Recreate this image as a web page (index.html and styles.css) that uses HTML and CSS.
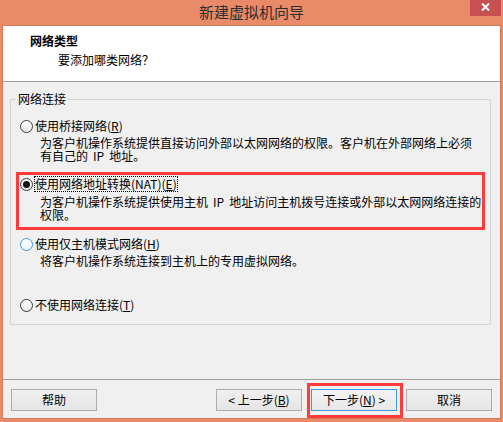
FILE: index.html
```html
<!DOCTYPE html>
<html lang="zh-CN">

<head>
    <meta charset="UTF-8">
    <meta name="viewport" content="width=device-width, initial-scale=1.0">
    <title>新建虚拟机向导</title>
    <link rel="stylesheet" href="styles.css">
</head>

<body>
    <div class="window">
        <div class="titlebar">
            <span></span>
            <span class="title">新建虚拟机向导</span>
            <span class="close">
                <svg width="9" height="8" viewBox="0 0 9 8">
                    <path d="M1 0.5 L8 7.5 M8 0.5 L1 7.5" stroke="#fff" stroke-width="2" fill="none" />
                </svg>
            </span>
        </div>

        <div class="client">
            <div class="header">
                <div class="h-title">网络类型</div>
                <div class="h-sub">要添加哪类网络？</div>
            </div>

            <div class="body">
                <fieldset class="group">
                    <legend>网络连接</legend>

                    <div class="opt">
                        <div class="row"><span class="radio"></span><span class="label">使用桥接网络(<u>R</u>)</span></div>
                        <div class="desc">为客户机操作系统提供直接访问外部以太网网络的权限。客户机在外部网络上必须<br>有自己的<span class="ip">IP</span>地址。</div>
                    </div>

                    <div class="opt marked">
                        <div class="row"><span class="radio on"></span><span class="label focus">使用网络地址转换(NAT)(<u>E</u>)</span></div>
                        <div class="desc nat">为客户机操作系统提供使用主机<span class="ip">IP</span>地址访问主机拨号连接或外部以太网网络连接的<br>权限。</div>
                    </div>

                    <div class="opt opt3">
                        <div class="row"><span class="radio hover"></span><span class="label">使用仅主机模式网络(<u>H</u>)</span></div>
                        <div class="desc">将客户机操作系统连接到主机上的专用虚拟网络。</div>
                    </div>

                    <div class="opt opt4">
                        <div class="row"><span class="radio"></span><span class="label">不使用网络连接(<u>T</u>)</span></div>
                    </div>
                </fieldset>
            </div>

            <div class="footer">
                <button class="btn">帮助</button>
                <span class="spacer"></span>
                <button class="btn">&lt; 上一步(<u>B</u>)</button>
                <button class="btn default marked-btn">下一步(<u>N</u>) &gt;</button>
                <button class="btn">取消</button>
            </div>
        </div>
    </div>
</body>

</html>
```

FILE: styles.css
```css
* {
    box-sizing: border-box;
}

body {
    margin: 0;
    font-family: "Noto Sans CJK SC", "Liberation Sans", sans-serif;
    font-size: 12px;
    color: #000;
    background-color: #e98b68;
}

.window {
    width: 503px;
    height: 422px;
    display: flex;
    flex-direction: column;
}

/* title bar */
.titlebar {
    height: 25px;
    flex: none;
    display: grid;
    grid-template-columns: 1fr auto 1fr;
    align-items: start;
}

.title {
    font-size: 15px;
    line-height: 23px;
    color: #2e2e2e;
}

.close {
    justify-self: end;
    width: 31px;
    height: 16px;
    margin-right: 2px;
    background-color: #c75050;
    display: flex;
    align-items: center;
    justify-content: center;
    padding-bottom: 3px;
}

.client {
    flex: 1;
    margin: 0 2px 3px;
    border: 1px solid #d27a55;
    background-color: #f0f0f0;
    display: flex;
    flex-direction: column;
}

/* header */
.header {
    height: 56px;
    flex: none;
    background-color: #fff;
    border-bottom: 1px solid #a0a0a0;
    padding: 8px 0 0 27px;
}

.h-title {
    font-weight: bold;
    line-height: 14px;
}

.h-sub {
    line-height: 14px;
    margin: 5px 0 0 28px;
}

/* body */
.body {
    flex: 1;
    padding: 10px 9px 0 7px;
}

.group {
    margin: 0;
    min-inline-size: 0;
    border: 1px solid #d5d5d5;
    padding: 12px 0 11px 9px;
}

.group legend {
    padding: 0 2px;
    margin-left: -4px;
    line-height: 14px;
}

.opt {
    position: relative;
}

.opt + .opt {
    margin-top: 14px;
}

.opt.opt3 {
    margin-top: 15px;
}

.opt.opt4 {
    margin-top: 30px;
}

.row {
    display: flex;
    align-items: center;
    height: 16px;
}

.radio {
    flex: none;
    width: 13px;
    height: 13px;
    border-radius: 50%;
    border: 1px solid #3a3a3a;
    background: linear-gradient(#ffffff, #e8e8e8);
    display: flex;
    align-items: center;
    justify-content: center;
    margin-right: 2px;
}

.radio.on::before {
    content: "";
    width: 7px;
    height: 7px;
    border-radius: 50%;
    background-color: #151515;
}

.radio.hover {
    border-color: #3c9bf0;
    background: linear-gradient(#ffffff, #eaf4fd);
}

.label {
    line-height: 14px;
    white-space: nowrap;
}

.label.focus {
    outline: 1px dotted #000;
    outline-offset: 0;
}

.desc {
    padding-left: 20px;
    margin-top: 2px;
    line-height: 13px;
    white-space: nowrap;
}

.desc.nat {
    margin-top: 3px;
}

.ip {
    margin: 0 5px;
}

/* red annotation boxes */
.marked::after {
    content: "";
    position: absolute;
    top: -4px;
    left: -4px;
    right: 5px;
    bottom: -9px;
    border: 3px solid #ff3b3b;
    pointer-events: none;
}

/* footer */
.footer {
    height: 39px;
    flex: none;
    border-top: 1px solid #a0a0a0;
    padding: 9px 8px 0;
    display: flex;
    align-items: flex-start;
    gap: 9px;
}

.spacer {
    flex: 1;
}

.btn {
    width: 86px;
    height: 22px;
    padding: 0;
    font-family: inherit;
    font-size: 12px;
    line-height: 20px;
    color: #000;
    border: 1px solid #acacac;
    background: linear-gradient(#f0f0f0, #e5e5e5);
}

.btn.default {
    border-color: #3c9bf0;
    background: linear-gradient(#f3f3f3, #e9e9e9);
}

.marked-btn {
    position: relative;
}

.marked-btn::after {
    content: "";
    position: absolute;
    top: -7px;
    left: -5px;
    right: -7px;
    bottom: -8px;
    border: 3px solid #ff3b3b;
}
```
